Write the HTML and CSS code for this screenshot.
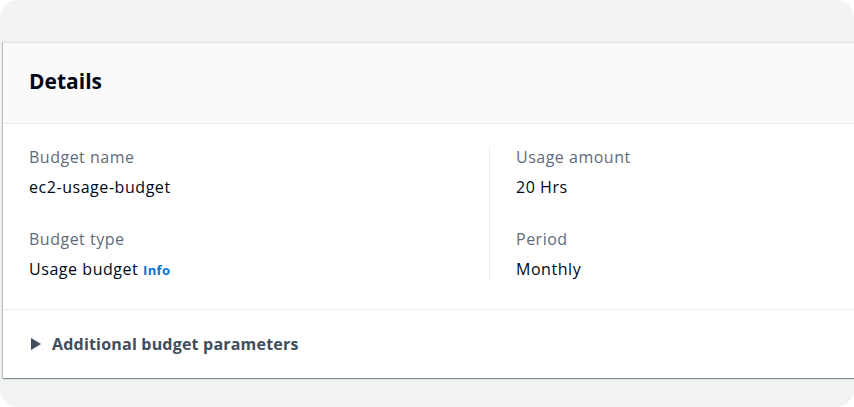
FILE: index.html
```html
<!DOCTYPE html>
<html lang="en">
<head>
<meta charset="utf-8">
<title>Details</title>
<link rel="stylesheet" href="styles.css">
</head>
<body>
<div class="frame">
  <section class="card">
    <header class="card-header">
      <h2 class="title">Details</h2>
    </header>
    <div class="card-body">
      <div class="col">
        <div class="kv">
          <div class="label">Budget name</div>
          <div class="value">ec2-usage-budget</div>
        </div>
        <div class="kv">
          <div class="label">Budget type</div>
          <div class="value">Usage budget <a class="info" href="#">Info</a></div>
        </div>
      </div>
      <div class="col col-right">
        <div class="kv">
          <div class="label">Usage amount</div>
          <div class="value">20 Hrs</div>
        </div>
        <div class="kv">
          <div class="label">Period</div>
          <div class="value">Monthly</div>
        </div>
      </div>
    </div>
    <div class="card-footer">
      <div class="expander">
        <svg class="caret" width="12" height="14" viewBox="0 0 12 14"><path d="M1 1 L11 7 L1 13 Z" fill="#414d5c"/></svg>
        <span>Additional budget parameters</span>
      </div>
    </div>
  </section>
</div>
</body>
</html>
```

FILE: styles.css
```css
html, body {
  margin: 0;
  padding: 0;
  background: #ffffff;
}
body {
  font-family: "Open Sans", "Noto Sans", sans-serif;
  color: #000716;
}
.frame {
  width: 854px;
  height: 407px;
  background: #f2f3f3;
  border-radius: 18px;
  overflow: hidden;
  padding-top: 42px;
  padding-left: 3px;
  box-sizing: border-box;
}
.card {
  width: 975px;
  background: #ffffff;
  border-top: 1px solid #e3e5e7;
  box-shadow: 0 1px 1px 0 rgba(0, 28, 36, 0.45), -1px 0 1px 0 rgba(0, 28, 36, 0.18);
}
.card-header {
  background: #fafafa;
  border-bottom: 1px solid #e9ebed;
  padding: 25px 26px 0;
  height: 55px;
}
.title {
  margin: 0;
  font-size: 21px;
  line-height: 26px;
  font-weight: 700;
  color: #000716;
}
.card-body {
  display: grid;
  grid-template-columns: 460px 1fr;
  padding: 22px 26px 28px;
  border-bottom: 1px solid #e9ebed;
}
.col {
  display: flex;
  flex-direction: column;
  gap: 30px;
}
.col-right {
  border-left: 1px solid #e9ebed;
  padding-left: 26px;
}
.kv {
  display: flex;
  flex-direction: column;
  gap: 8px;
}
.label {
  font-size: 16px;
  line-height: 22px;
  letter-spacing: 0.5px;
  color: #5f6b7a;
}
.value {
  font-size: 16px;
  line-height: 22px;
  letter-spacing: 0.55px;
  color: #000716;
}
.info {
  font-size: 13px;
  font-weight: 700;
  letter-spacing: 0.3px;
  color: #0972d3;
  text-decoration: none;
}
.card-footer {
  padding: 22px 26px 22px;
}
.expander {
  display: flex;
  align-items: center;
  gap: 10px;
  font-size: 16px;
  line-height: 24px;
  font-weight: 700;
  letter-spacing: 0.2px;
  color: #414d5c;
}
.caret {
  display: block;
  margin-left: 1px;
}
```
